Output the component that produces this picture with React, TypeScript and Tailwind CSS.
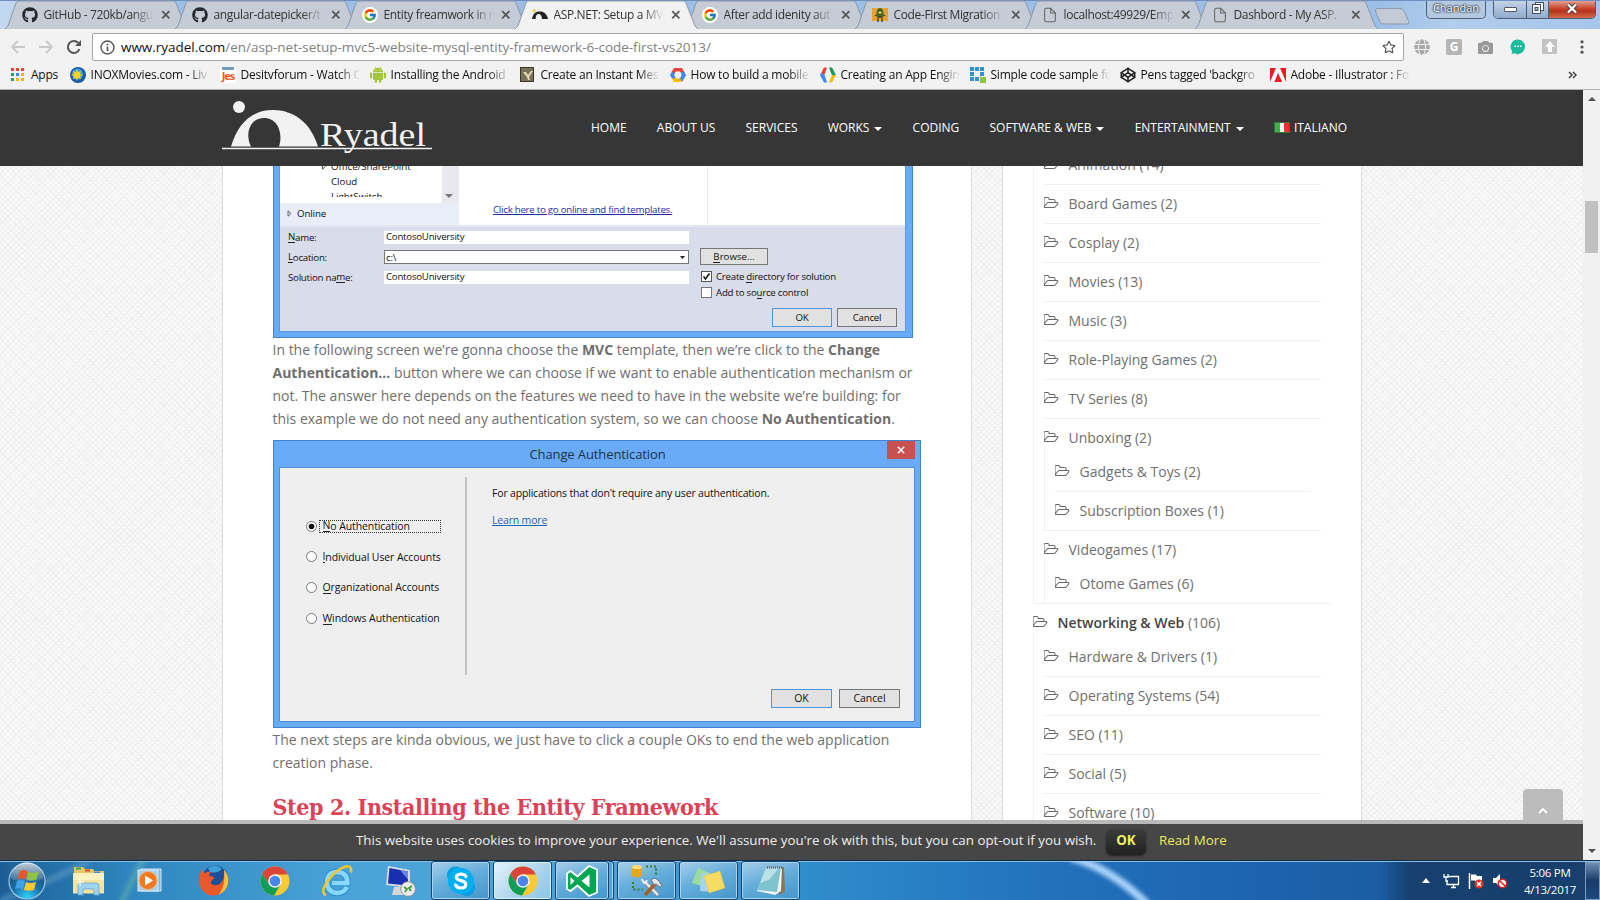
import React from "react";
import { FaGithub, FaRegStar, FaCamera, FaGlobe } from "react-icons/fa";
import { FcGoogle } from "react-icons/fc";
import { FiCodepen, FiFile } from "react-icons/fi";

const ui = "font-['Open_Sans','Noto_Sans',sans-serif]";

/* ---------- icons ---------- */

function RyadelIcon() {
  return (
    <svg width="16" height="16" viewBox="0 0 16 16">
      <circle cx="2.2" cy="3.8" r="1.7" fill="#f5d442" />
      <path d="M0 12C1 6 4 4.400 8 4.400c4 0 7 2.600 8 7.600h-6C10 9.500 9 7 6.500 7 4.500 7 3.600 9 3.600 12z" fill="#222" />
    </svg>
  );
}

function BugIcon() {
  return (
    <svg width="16" height="16" viewBox="0 0 16 16">
      <rect y="1" width="16" height="13" fill="#e8a030" />
      <ellipse cx="8" cy="6" rx="3.500" ry="5" fill="#4b6b2a" />
      <path d="M6 4h4M5.500 7h5M5 10h6M6 11v4M10 11v4M3 8l2 1M13 8l-2 1" stroke="#2b3a18" strokeWidth="1.200" />
      <circle cx="8" cy="5.500" r="1.600" fill="#b7cf6a" />
    </svg>
  );
}

function AndroidIcon() {
  return (
    <svg width="16" height="17" viewBox="0 0 16 17" fill="#a4c639">
      <path d="M3 6a5 4.200 0 0 1 10 0zM3 6.800h10v6.200q0 1-1 1H4q-1 0-1-1z" />
      <path d="M5 .800l1.200 2M11 .800l-1.200 2" stroke="#a4c639" strokeWidth=".8" />
      <rect x="0" y="6.600" width="2.200" height="6" rx="1.100" />
      <rect x="13.800" y="6.600" width="2.200" height="6" rx="1.100" />
      <rect x="4.800" y="13" width="2.200" height="4" rx="1.100" />
      <rect x="9" y="13" width="2.200" height="4" rx="1.100" />
      <circle cx="5.900" cy="4.200" r=".55" fill="#fff" />
      <circle cx="10.100" cy="4.200" r=".55" fill="#fff" />
    </svg>
  );
}

function ChromeIcon({ size = 30 }: { size?: number }) {
  return (
    <svg width={size} height={size} viewBox="0 0 30 30">
      <circle cx="15" cy="15" r="14.500" fill="#fbc934" />
      <path d="M2.440 7.750A14.500 14.500 0 0 1 27.560 7.750L15 8.500 9 18z" fill="#db4437" />
      <path d="M2.440 7.750A14.500 14.500 0 0 0 14 29.500L20.600 18.400 9.300 18.200z" fill="#0f9d58" />
      <path d="M15 8.400h12.900A14.500 14.500 0 0 0 27.560 7.750z" fill="#db4437" />
      <circle cx="15" cy="15" r="6.800" fill="#f4f4f4" />
      <circle cx="15" cy="15" r="5.300" fill="#4a86ea" />
    </svg>
  );
}

function FolderOpen() {
  return (
    <svg width="15" height="14" viewBox="0 0 1920 1792" fill="#666" className="shrink-0">
      <path d="M1717 931q0-35-53-35h-1088q-40 0-85.500 21.500t-71.500 52.500l-294 363q-18 24-18 40 0 35 53 35h1088q40 0 86-22t71-53l294-363q18-22 18-39zm-1141-163h768v-160q0-40-28-68t-68-28h-576q-40 0-68-28t-28-68v-64q0-40-28-68t-68-28h-320q-40 0-68 28t-28 68v853l256-315q44-53 116-87.500t140-34.500zm1269 163q0 62-46 120l-295 363q-43 53-116 87.500t-140 34.500h-1088q-92 0-158-66t-66-158v-960q0-92 66-158t158-66h320q92 0 158 66t66 158v32h544q92 0 158 66t66 158v160h192q54 0 99 24.500t67 70.500q15 32 15 68z" />
    </svg>
  );
}

/* ---------- browser chrome ---------- */

type TabData = { title: string; icon: React.ReactNode; active?: boolean };

const google = (
  <span className="flex h-4 w-4 items-center justify-center rounded-full bg-white">
    <FcGoogle size={14} />
  </span>
);
const page = <FiFile size={16} color="#666" strokeWidth={1.6} />;

const tabs: TabData[] = [
  { title: "GitHub - 720kb/angu", icon: <FaGithub size={16} color="#24292e" /> },
  { title: "angular-datepicker/t", icon: <FaGithub size={16} color="#24292e" /> },
  { title: "Entity freamwork in m", icon: google },
  { title: "ASP.NET: Setup a MV", icon: <RyadelIcon />, active: true },
  { title: "After add idenity aut", icon: google },
  { title: "Code-First Migration", icon: <BugIcon /> },
  { title: "localhost:49929/Emp", icon: page },
  { title: "Dashbord - My ASP.", icon: page },
];

function Tab({ title, icon, active }: TabData) {
  return (
    <div className={active ? "relative z-20 flex h-[29px] w-[170px] items-center pl-[17px]" : "relative z-10 flex h-[29px] w-[170px] items-center pl-[17px]"}>
      <svg className="absolute top-0 left-0 -z-10" width="184" height="30" viewBox="0 0 184 30">
        <path
          d="M0 29 L3 26 L11 3 Q12 1 14 1 H168 Q170 1 171 3 L180 26 L183 29"
          fill={active ? "#f2f2f2" : "#c6ccd5"}
          stroke={active ? "#8f9bab" : "#8a97a8"}
        />
        {active && <path d="M1 29.500H182" stroke="#f2f2f2" strokeWidth="2" />}
      </svg>
      {icon}
      <span className="ml-[5.500px] w-[110px] text-[12px] tracking-[-0.36px] whitespace-nowrap text-[#333] [mask-image:linear-gradient(to_right,#000_80%,transparent)]">{title}</span>
      <svg className="ml-[7.500px]" width="10" height="10" viewBox="0 0 10 10">
        <path d="M1.200 1.200l7.200 7.200M8.400 1.200l-7.200 7.200" stroke="#555" strokeWidth="1.700" />
      </svg>
    </div>
  );
}

function TabStrip() {
  return (
    <div className="flex h-[29px] border-t border-[#6e8fbf] bg-[linear-gradient(to_right,#c3d8f0_0px,#9bbfe6_120px,#9bbfe6_1380px,#b3cdec_1450px,#a5c5ea_1600px)] pl-[5px]">
      <div className="-mt-px flex">
        {tabs.map((t) => (
          <Tab key={t.title} {...t} />
        ))}
      </div>
      <svg className="ml-[9px] mt-[6px]" width="38" height="19" viewBox="0 0 38 19">
        <path d="M3 1.500H26Q29 1.500 30 4L35 15Q36 17 33 17H10Q7 17 6 15L1.500 4Q1 1.500 3 1.500z" fill="#c3cad5" stroke="#8d9bb0" />
      </svg>
      <div className="ml-[14px] flex h-[18px] w-[60px] items-center justify-center rounded-b-[5px] border border-t-0 border-[#4d5f78] bg-[#b4c8df] pb-[2px] text-[11px] text-white [text-shadow:0_0_2px_#000,0_0_2px_#000]">
        Chandan
      </div>
      <div className="ml-[7px] flex h-[18px] w-[103px] overflow-hidden rounded-b-[5px] border border-t-0 border-[#4d5f78]">
        <div className="flex w-[33px] items-center justify-center border-r border-[#4d5f78] bg-gradient-to-b from-[#c2d3e8] to-[#90abcc]">
          <div className="h-[5px] w-[13px] rounded-[1px] border border-[#4d5566] bg-white" />
        </div>
        <div className="flex w-[22px] items-center justify-center border-r border-[#4d5f78] bg-gradient-to-b from-[#c2d3e8] to-[#90abcc]">
          <svg className="-mt-[3px]" width="12" height="12" viewBox="0 0 12 12" fill="#fff" stroke="#454e60">
            <rect x="3.500" y=".5" width="8" height="8" />
            <rect x=".5" y="2.500" width="8" height="9" />
            <rect x="3" y="5.500" width="3" height="3" fill="#9fb5cf" />
          </svg>
        </div>
        <div className="flex flex-1 items-center justify-center bg-[linear-gradient(#e0a193,#c9422a_45%,#b5341c_60%,#d56a4a)]">
          <svg className="-mt-[3px]" width="12" height="11" viewBox="0 0 12 11">
            <path d="M2 1.500l8 8M10 1.500l-8 8" stroke="#4a3540" strokeWidth="4" />
            <path d="M2 1.500l8 8M10 1.500l-8 8" stroke="#fff" strokeWidth="2.400" />
          </svg>
        </div>
      </div>
    </div>
  );
}

function Toolbar() {
  return (
    <div className="flex h-[33px] items-center bg-[#f2f2f2] pt-[3px]">
      <svg className="ml-[10px]" width="16" height="14" viewBox="0 0 16 14" fill="none" stroke="#c9c9c9" strokeWidth="1.800">
        <path d="M15 7H2M8 1L2 7l6 6" />
      </svg>
      <svg className="ml-[12px]" width="16" height="14" viewBox="0 0 16 14" fill="none" stroke="#c9c9c9" strokeWidth="1.800">
        <path d="M1 7h13M8 1l6 6-6 6" />
      </svg>
      <svg className="ml-[12px]" width="16" height="16" viewBox="0 0 16 16">
        <path d="M13.500 10A6 6 0 1 1 12.200 3.800" fill="none" stroke="#555" strokeWidth="2" />
        <path d="M15 1v6H9z" fill="#555" />
      </svg>
      <div className="ml-[10px] flex h-[28px] w-[1312px] items-center rounded-[2px] border border-[#a6a6a6] bg-white">
        <svg className="ml-[7px]" width="15" height="15" viewBox="0 0 15 15" fill="none" stroke="#555" strokeWidth="1.400">
          <circle cx="7.500" cy="7.500" r="6.500" />
          <path d="M7.500 6.500v4.500M7.500 3.700v1.600" strokeWidth="1.700" />
        </svg>
        <span className="ml-[6px] flex-1 text-[13.500px] tracking-[-0.025px] whitespace-nowrap text-[#808080]">
          <span className="text-[#111]">www.ryadel.com</span>/en/asp-net-setup-mvc5-website-mysql-entity-framework-6-code-first-vs2013/
        </span>
        <FaRegStar className="mr-[7px]" size={14} color="#555" />
      </div>
      <div className="ml-[10px] flex w-[176px] items-center justify-between">
        <FaGlobe size={16} color="#a8a8a8" />
        <span className="flex h-4 w-4 items-center justify-center rounded-[2px] bg-[#b5b5b5] text-[12px] font-bold text-white">G</span>
        <FaCamera size={15} color="#999" />
        <svg width="16" height="16" viewBox="0 0 16 16">
          <path d="M8 .5a7.300 7.300 0 1 1-4 13.600L1.500 15.500l.8-3A7.300 7.300 0 0 1 8 .5z" fill="#1abc9c" />
          <path d="M4.500 7.200h1.500M7.300 7.200h1.500M10 7.200h1.500" stroke="#fff" strokeWidth="1.400" />
        </svg>
        <svg width="16" height="16" viewBox="0 0 16 16">
          <rect width="15" height="15" rx="1" fill="#c2c2c2" />
          <path d="M8 2l5 6h-3v5H6V8H3z" fill="#fff" />
        </svg>
        <svg width="16" height="16" viewBox="0 0 16 16" fill="#555">
          <circle cx="8" cy="2.800" r="1.600" />
          <circle cx="8" cy="8" r="1.600" />
          <circle cx="8" cy="13.200" r="1.600" />
        </svg>
      </div>
    </div>
  );
}

const bookmarks: { label: string; icon: React.ReactNode }[] = [
  {
    label: "INOXMovies.com - Liv",
    icon: (
      <svg width="16" height="16" viewBox="0 0 16 16">
        <circle cx="8" cy="8" r="8" fill="#1b5ca8" />
        <circle cx="7.500" cy="7" r="5.500" fill="#3fa0d8" />
        <path d="M7 2l1 3 3-1-1 3 3 1-3 1 1 3-3-1-1 3-1-3-3 1 1-3-3-1 3-1-1-3 3 1z" fill="#f7d21e" />
      </svg>
    ),
  },
  {
    label: "Desitvforum - Watch O",
    icon: (
      <span className="flex h-4 w-4 flex-col items-center bg-white leading-none">
        <span className="h-[3px] w-[12px] bg-[#6f9dbb]" />
        <span className="text-[11px] font-bold tracking-[-1px] text-[#ef5a28]">Jes</span>
      </span>
    ),
  },
  { label: "Installing the Android", icon: <AndroidIcon /> },
  {
    label: "Create an Instant Mes",
    icon: (
      <svg width="16" height="16" viewBox="0 0 16 16">
        <rect x=".5" y=".5" width="13" height="14" fill="#77725a" stroke="#3b3626" />
        <path d="M3 5l3 0 2 3 3-4h2l-4 6 1 3H8L7 10z" fill="#e9dcae" />
      </svg>
    ),
  },
  {
    label: "How to build a mobile",
    icon: (
      <svg width="16" height="16" viewBox="0 0 16 16">
        <path d="M4 1h8l2.500 4.500-3.500.5-1-1.500H6L4.500 6.500 1.500 5z" fill="#e2453a" />
        <path d="M14 4.500L16 8l-4 7-3-3.500 2.500-3.500-1-2.500z" fill="#4285f4" />
        <path d="M12 15H4l-2.500-4.500L5 9.500l1.500 2h4z" fill="#fbbc05" />
        <path d="M2 11.500L0 8l2-3.500 3 1.800L4.200 8l1.600 2.800z" fill="#4285f4" />
        <circle cx="8" cy="8" r="3.300" fill="#eef1f6" />
      </svg>
    ),
  },
  {
    label: "Creating an App Engin",
    icon: (
      <svg width="16" height="16" viewBox="0 0 16 16">
        <path d="M1 6.500L4 .5h3L4.500 8z" fill="#e2453a" />
        <path d="M0 8l1-2 3.500 2L7 15.500H4z" fill="#4285f4" />
        <path d="M9 .5h3l4 7.500-4 .5z" fill="#0f9d58" />
        <path d="M12 8h4l-4 7.500H9z" fill="#fbbc05" />
      </svg>
    ),
  },
  {
    label: "Simple code sample fo",
    icon: (
      <svg width="16" height="16" viewBox="0 0 16 16" fill="#2f93d0">
        <path d="M0 0h4v4H0zM5 0h4v4H5zM10 0h4v4h-4zM0 5h4v4H0zM10 5h4v4h-4zM0 10h4v4H0zM5 10h4v4H5z" />
        <rect x="10" y="10" width="6" height="6" fill="#8cc63f" />
      </svg>
    ),
  },
  { label: "Pens tagged 'backgro", icon: <FiCodepen size={16} color="#222" strokeWidth={2.4} /> },
  {
    label: "Adobe - Illustrator : Fo",
    icon: (
      <svg width="16" height="16" viewBox="0 0 16 16">
        <rect y="1" width="16" height="14" fill="#ed1c24" />
        <path d="M6 1h4l6 14h-4l-1.500-3.500H7L8.500 8 10 11H6L4.300 15H0z" fill="#fff" />
        <path d="M8 5.500l3.800 9.500H9.500L8.300 12H5.800z" fill="#ed1c24" />
      </svg>
    ),
  },
];

const appColors = ["bg-[#e2453a]", "bg-[#e2453a]", "bg-[#e2453a]", "bg-[#2f9e57]", "bg-[#4285f4]", "bg-[#f2b60c]", "bg-[#2f9e57]", "bg-[#f2b60c]", "bg-[#f2b60c]"];

function BookmarkBar() {
  return (
    <div className="flex h-[28px] items-center border-b border-[#b3b3b3] bg-[#f2f2f2] pb-[2px] pl-[11px] text-[12px] tracking-[-0.22px] text-[#111]">
      <div className="grid w-[13px] grid-cols-3 gap-[2px]">
        {appColors.map((c, i) => (
          <span key={i} className={`h-[3px] w-[3px] ${c}`} />
        ))}
      </div>
      <span className="ml-[7px] w-[39px]">Apps</span>
      {bookmarks.map((b) => (
        <div key={b.label} className="flex w-[150px] items-center">
          <span className="flex w-4 justify-center">{b.icon}</span>
          <span className="ml-[4.500px] w-[119px] whitespace-nowrap [mask-image:linear-gradient(to_right,#000_82%,transparent)]">{b.label}</span>
        </div>
      ))}
      <svg className="ml-[148px]" width="10" height="8" viewBox="0 0 10 8" fill="none" stroke="#444" strokeWidth="1.500">
        <path d="M1 1l3 3-3 3M5 1l3 3-3 3" />
      </svg>
    </div>
  );
}

/* ---------- site ---------- */

function Caret() {
  return (
    <svg className="ml-[5px] mt-[2px]" width="8" height="4" viewBox="0 0 8 4">
      <path d="M0 0h8L4 4z" fill="#fff" />
    </svg>
  );
}

const nav = [
  { label: "HOME" },
  { label: "ABOUT US" },
  { label: "SERVICES" },
  { label: "WORKS", caret: true },
  { label: "CODING" },
  { label: "SOFTWARE & WEB", caret: true },
  { label: "ENTERTAINMENT", caret: true },
];

function SiteHeader() {
  return (
    <header className="flex h-[76px] shrink-0 bg-[#363636]">
      <svg className="mt-[9px] ml-[222px]" width="211" height="58" viewBox="0 0 211 58">
        <circle cx="17" cy="8" r="6" fill="#f2f2f2" />
        <path d="M9 47.500C16 24 30 11 51 11s38 13 45 36.500H57C61 36 57 19 42 19S23 36 29 47.500z" fill="#f2f2f2" />
        <path d="M0 49.500H210" stroke="#f2f2f2" strokeWidth="1.300" />
        <text x="98" y="47" fontSize="33" fill="#f2f2f2" textLength="106" lengthAdjust="spacingAndGlyphs" className="font-['Liberation_Serif',serif]">
          Ryadel
        </text>
      </svg>
      <nav className="ml-[158px] flex h-[75px] items-center gap-[30.200px] text-[12px] text-white">
        {nav.map((n) => (
          <span key={n.label} className="flex items-center whitespace-nowrap">
            {n.label}
            {n.caret && <Caret />}
          </span>
        ))}
        <span className="flex items-center">
          <span className="mr-[4px] flex h-[11px] w-[16px] border border-[#2f7a35] border-r-[#d02020]">
            <span className="flex-1 bg-[#3fae49]" />
            <span className="flex-1 bg-white" />
            <span className="flex-1 bg-[#f03030]" />
          </span>
          ITALIANO
        </span>
      </nav>
    </header>
  );
}

function DialogButton({ label, primary, small }: { label: string; primary?: boolean; small?: boolean }) {
  return (
    <div
      className={`flex h-[19px] items-center justify-center border bg-[#e1e1e1] ${small ? "w-[60px]" : "w-[61px]"} ${primary ? "border-[#4a94e0]" : "border-[#777]"}`}
    >
      {label}
    </div>
  );
}

const U = ({ children }: { children: React.ReactNode }) => <span className="border-b border-[#222]">{children}</span>;

function NewProjectDialog() {
  return (
    <div className="h-[172px] w-[640px] border border-t-0 border-[#3f83cf] bg-[#6aabf7] pr-[6px] pl-[5px] text-[9.700px] leading-[13px] tracking-[-0.25px] text-[#111]">
      <div className="flex h-[166px] flex-col overflow-hidden border border-t-0 border-[#5a9be6] bg-[#d9dcea]">
        <div className="flex h-[59px] shrink-0">
          <div className="w-[179px] bg-[#e8edf8]">
            <div className="flex h-[37px] bg-white">
              <div className="h-[31px] w-[162px] overflow-hidden pl-[51px] tracking-normal">
                <div className="-mt-[7px] -ml-[9px] flex h-[15px] items-center">
                  <svg className="mr-[5px]" width="4" height="7" viewBox="0 0 4 7">
                    <path d="M.5.800v5.400L3.400 3.500z" fill="none" stroke="#555" />
                  </svg>
                  Office/SharePoint
                </div>
                <div className="h-[15px] leading-[15px]">Cloud</div>
                <div className="h-[15px] leading-[15px]">LightSwitch</div>
              </div>
              <div className="flex w-[17px] items-end justify-center bg-[#e8e8ee] pr-[3px] pb-[5px]">
                <svg width="8" height="4" viewBox="0 0 8 4">
                  <path d="M0 0h8L4 4z" fill="#777" />
                </svg>
              </div>
            </div>
            <div className="flex h-[21px] items-center pl-[7px] tracking-[-0.1px]">
              <svg className="mr-[5px]" width="5" height="7" viewBox="0 0 4 7">
                <path d="M.5.800v5.400L3.400 3.500z" fill="none" stroke="#444" strokeWidth=".8" />
              </svg>
              Online
            </div>
          </div>
          <div className="w-[249px] border-r border-[#ececf2] bg-white pt-[37px] pl-[34px] whitespace-nowrap">
            <span className="tracking-[-0.25px] text-[#1c30a8] underline">Click here to go online and find templates.</span>
          </div>
          <div className="flex-1 bg-white" />
        </div>
        <div className="flex flex-1 border-t-2 border-[#e4e7f3] pl-[8px]">
          <div className="flex w-[96px] flex-col">
            <div className="flex h-5 items-center leading-[11px]"><U>N</U>ame:</div>
            <div className="flex h-5 items-center leading-[11px]"><U>L</U>ocation:</div>
            <div className="flex h-5 items-center leading-[11px]">Solution na<U>m</U>e:</div>
          </div>
          <div className="flex w-[305px] flex-col pt-[3px]">
            <div className="mt-px h-[13px] bg-white pl-[2px] leading-[12px]">ContosoUniversity</div>
            <div className="mt-[6px] flex h-[14px] items-center justify-between border border-[#777] bg-white pr-[3px] pl-px">
              c:\
              <svg width="5" height="3" viewBox="0 0 5 3">
                <path d="M0 0h5L2.500 3z" fill="#222" />
              </svg>
            </div>
            <div className="mt-[7px] h-[13px] bg-white pl-[2px] leading-[12px]">ContosoUniversity</div>
          </div>
          <div className="ml-[11px] flex w-[200px] flex-col pt-[21px]">
            <div className="flex h-[17px] w-[68px] items-center justify-center border border-[#777] bg-[#e1e1e1] leading-[11px] tracking-normal">
              <U>B</U>rowse...
            </div>
            <div className="mt-[5px] flex h-[13px] items-center pl-px leading-[11px] whitespace-nowrap">
              <svg className="mr-[4px]" width="11" height="11" viewBox="0 0 11 11">
                <rect x=".5" y=".5" width="10" height="10" fill="#fff" stroke="#555" />
                <path d="M2.500 5.500l2 2.500 4-5.500" fill="none" stroke="#111" strokeWidth="1.500" />
              </svg>
              Create <span className="w-[2px]" /><U>d</U>irectory for solution
            </div>
            <div className="mt-[3px] flex h-[13px] items-center pl-px leading-[11px] whitespace-nowrap">
              <svg className="mr-[4px]" width="11" height="11" viewBox="0 0 11 11">
                <rect x=".5" y=".5" width="10" height="10" fill="#fff" stroke="#777" />
              </svg>
              Add to so<U>u</U>rce control
            </div>
            <div className="mt-[9px] flex gap-[5px] pl-[72px]">
              <DialogButton label="OK" primary small />
              <DialogButton label="Cancel" small />
            </div>
          </div>
        </div>
      </div>
    </div>
  );
}

function Radio({ first, rest, checked }: { first: string; rest: string; checked?: boolean }) {
  return (
    <div className="flex h-[30.600px] items-center">
      <svg className="mr-[2px]" width="11" height="11" viewBox="0 0 11 11">
        <circle cx="5.500" cy="5.500" r="5" fill="#fff" stroke="#777" />
        {checked && <circle cx="5.500" cy="5.500" r="2.800" fill="#111" />}
      </svg>
      <span
        className={
          checked
            ? "flex h-[13px] w-[122px] items-center border border-dotted border-[#333] pl-[2.500px] leading-[11px] whitespace-nowrap"
            : "flex h-[13px] items-center pl-[3.500px] leading-[12px] whitespace-nowrap"
        }
      >
        <U>{first}</U>
        {rest}
      </span>
    </div>
  );
}

function ChangeAuthDialog() {
  return (
    <div className="flex h-[288px] w-[648px] flex-col border border-[#3f83cf] bg-[#6aabf7] px-[6px] pb-[5px] text-[10.500px] tracking-[-0.1px] text-[#111]">
      <div className="flex h-[26px] shrink-0">
        <div className="flex-1 pl-[28px] text-center text-[13px] leading-[27px] text-[#1d3348]">Change Authentication</div>
        <div className="-mr-px flex h-[18px] w-[28px] items-center justify-center bg-[#c75050]">
          <svg width="8" height="8" viewBox="0 0 8 8">
            <path d="M.8.800l6.400 6.400M7.200.800L.8 7.200" stroke="#fff" strokeWidth="1.500" />
          </svg>
        </div>
      </div>
      <div className="-mx-px flex flex-1 flex-col border border-[#4a90dd] bg-[#f0eff0] pt-[9px] pr-[14px]">
        <div className="flex">
          <div className="h-[198px] w-[187px] border-r-2 border-[#c3c3c3] pt-[34px] pl-[26px]">
            <Radio first="N" rest="o Authentication" checked />
            <Radio first="I" rest="ndividual User Accounts" />
            <Radio first="O" rest="rganizational Accounts" />
            <Radio first="W" rest="indows Authentication" />
          </div>
          <div className="pt-[8px] pl-[25px] leading-[16px] tracking-[-0.18px]">
            <p>For applications that don't require any user authentication.</p>
            <p className="mt-[11px] text-[#1b65b5] underline">Learn more</p>
          </div>
        </div>
        <div className="mt-[14px] flex justify-end gap-[7px]">
          <DialogButton label="OK" primary />
          <DialogButton label="Cancel" />
        </div>
      </div>
    </div>
  );
}

function Article() {
  return (
    <article className="ml-[222px] w-[750px] border-x border-[#dcdcdc] bg-white pl-[50px] text-[14px] leading-[23px] text-[#6f6f6f]">
      <NewProjectDialog />
      <p className="-ml-[0.500px] w-[660px] whitespace-nowrap">
        In the following screen we’re gonna choose the <b>MVC</b> template, then we’re click to the <b>Change</b>
        <br />
        <b>Authentication…</b> button where we can choose if we want to enable authentication mechanism or
        <br />
        not. The answer here depends on the features we need to have in the website we’re building: for
        <br />
        this example we do not need any authentication system, so we can choose <b>No Authentication</b>.
      </p>
      <div className="mt-[10px]">
        <ChangeAuthDialog />
      </div>
      <p className="-ml-[0.500px] whitespace-nowrap">
        The next steps are kinda obvious, we just have to click a couple OKs to end the web application
        <br />
        creation phase.
      </p>
      <h2 className="mt-[17px] -ml-[0.500px] text-[23px] leading-[32px] font-bold tracking-[-0.38px] whitespace-nowrap text-[#dc4155] font-['DejaVu_Serif_Condensed','DejaVu_Serif',serif] [font-stretch:condensed]">
        Step 2. Installing the Entity Framework
      </h2>
    </article>
  );
}

type Category = { name: string; count: number; children?: Category[]; bold?: boolean };

const entertainment: Category[] = [
  { name: "Animation", count: 14 },
  { name: "Board Games", count: 2 },
  { name: "Cosplay", count: 2 },
  { name: "Movies", count: 13 },
  { name: "Music", count: 3 },
  { name: "Role-Playing Games", count: 2 },
  { name: "TV Series", count: 8 },
  {
    name: "Unboxing",
    count: 2,
    children: [
      { name: "Gadgets & Toys", count: 2 },
      { name: "Subscription Boxes", count: 1 },
    ],
  },
  { name: "Videogames", count: 17, children: [{ name: "Otome Games", count: 6 }] },
];

const networking: Category = {
  name: "Networking & Web",
  count: 106,
  bold: true,
  children: [
    { name: "Hardware & Drivers", count: 1 },
    { name: "Operating Systems", count: 54 },
    { name: "SEO", count: 11 },
    { name: "Social", count: 5 },
    { name: "Software", count: 10 },
  ],
};

function CategoryItem({ item }: { item: Category }) {
  return (
    <li className="border-b border-[#f0f0f0] last:border-b-0">
      <div className={item.children ? "flex h-[28px] items-start" : "flex h-[38px] items-start"}>
        <span className="flex h-[36px] items-center whitespace-nowrap">
          <FolderOpen />
          <span className="ml-[9.500px]">
            {item.bold ? <span className="font-semibold text-[#444]">{item.name}</span> : item.name} ({item.count})
          </span>
        </span>
      </div>
      {item.children && <CategoryList items={item.children} />}
    </li>
  );
}

function CategoryList({ items, flush }: { items: Category[]; flush?: boolean }) {
  return (
    <ul className={flush ? "border-l border-[#f0f0f0] pr-[10px] pl-[10px]" : "border-l border-[#f0f0f0] pt-[6px] pr-[10px] pl-[10px]"}>
      {items.map((c) => (
        <CategoryItem key={c.name} item={c} />
      ))}
    </ul>
  );
}

function Sidebar() {
  return (
    <aside className="ml-[30px] w-[360px] border-x border-[#dcdcdc] bg-white pr-[30px] pl-[30px] text-[14px] text-[#6f6f6f]">
      <div className="-mt-[20px]">
        <div className="border-b border-[#f0f0f0]">
          <CategoryList items={entertainment} flush />
        </div>
        <ul>
          <CategoryItem item={networking} />
        </ul>
      </div>
    </aside>
  );
}

function CookieBar() {
  return (
    <div className="flex h-[40px] shrink-0 items-center border-t-4 border-[#b9b9b9] bg-[#464646] pb-px pl-[356px] text-[13.333px] text-[#eee]">
      <span className="w-[750px] pb-px whitespace-nowrap">This website uses cookies to improve your experience. We'll assume you're ok with this, but you can opt-out if you wish.</span>
      <span className="flex h-[26px] w-[40px] items-center justify-center rounded-[6px] bg-gradient-to-b from-[#3c3c3c] to-[#222] pb-px font-bold text-[#eef066] shadow-[0_1px_2px_#222]">OK</span>
      <span className="ml-[13px] pb-px text-[#e6ea62]">Read More</span>
    </div>
  );
}

function Scrollbar() {
  return (
    <div className="flex w-[17px] flex-col items-center bg-[#f1f1f1]">
      <svg className="mt-[7px]" width="8" height="4" viewBox="0 0 8 4">
        <path d="M4 0l4 4H0z" fill="#505050" />
      </svg>
      <div className="mt-[100px] h-[52px] w-[13px] bg-[#c1c1c1]" />
      <svg className="mt-auto mb-[7px]" width="8" height="4" viewBox="0 0 8 4">
        <path d="M0 0h8L4 4z" fill="#505050" />
      </svg>
    </div>
  );
}

/* ---------- taskbar ---------- */

function StartOrb() {
  return (
    <svg className="ml-[8px]" width="38" height="38" viewBox="0 0 38 38">
      <defs>
        <radialGradient id="orb" cx=".5" cy=".95" r=".9">
          <stop offset="0" stopColor="#2fd0ff" />
          <stop offset=".45" stopColor="#1c6fa8" />
          <stop offset="1" stopColor="#1b466e" />
        </radialGradient>
        <linearGradient id="orbShine" x2="0" y2="1">
          <stop offset="0" stopColor="#fff" stopOpacity=".75" />
          <stop offset="1" stopColor="#fff" stopOpacity=".1" />
        </linearGradient>
      </defs>
      <circle cx="19" cy="19" r="18" fill="url(#orb)" stroke="#9cc6e4" strokeWidth="1.200" />
      <path d="M2.500 17A16.500 16.500 0 0 1 35.500 17Q19 22 2.500 17z" fill="url(#orbShine)" />
      <path d="M12 9q4-2 7.500.3l-2 8q-3-2-8-.3z" fill="#e8542a" />
      <path d="M20.500 10q4 2 10-.5l-2 8q-5 2-10 0z" fill="#8fc43e" />
      <path d="M9 19q4-2 8 .3l-2 8q-4-2-8-.2z" fill="#3fa0e8" />
      <path d="M18 20q4 2 10 0l-2 8q-5 1.500-10 0z" fill="#fcc92e" />
    </svg>
  );
}

function ExplorerIcon() {
  return (
    <svg width="34" height="30" viewBox="0 0 34 30">
      <path d="M2 1h9l2 2h8l1 2h10v22H2z" fill="#e6c766" />
      <rect x="4" y="1.500" width="5" height="2" fill="#2fa84a" />
      <rect x="13" y="3.500" width="5" height="2" fill="#d8502e" />
      <rect x="22" y="5.500" width="6" height="2" fill="#3b8fe0" />
      <path d="M1 7h31v20.500H1z" fill="#f7e49c" />
      <path d="M1 7h31v7H1z" fill="#fbf0c0" />
      <path d="M6 29V20q0-3 3-3h15q3 0 3 3v9h-5v-6H11v6z" fill="#9ed4f2" stroke="#5fa5cf" strokeWidth=".8" />
      <path d="M8 12v8M4 16h8" stroke="#fff" strokeWidth="1.200" />
    </svg>
  );
}

function MediaPlayerIcon() {
  return (
    <svg width="28" height="26" viewBox="0 0 28 26">
      <rect x="4" y="1" width="20" height="22" fill="#7fb9e0" stroke="#cfe6f6" />
      <rect x="1" y="2" width="20" height="21" fill="#a9d0ea" stroke="#d8ecf8" />
      <circle cx="11" cy="12.500" r="9" fill="#f07820" stroke="#f8b070" />
      <path d="M8 7.500l8 5-8 5z" fill="#fff" />
    </svg>
  );
}

function FirefoxIcon() {
  return (
    <svg width="31" height="31" viewBox="0 0 31 31">
      <circle cx="17" cy="13" r="12.500" fill="#1d4f9a" />
      <path d="M10 3q8-5 14 1-5 5-12 3z" fill="#3fa0d8" />
      <path d="M26 5q6 7 3.500 15Q26 30 15 30.500 4 30 1.500 19 .5 11 4 4q1 3 3 4 3-2 6-1-2 2-1.500 4 4 0 5 2-3 2-4 5 4 4 9 1 6-5 4.500-14z" fill="#e8582a" />
      <path d="M26 5q6 7 3.500 15-2 7-9 9.500Q28 22 26 5z" fill="#f9c23c" />
    </svg>
  );
}

function IEIcon() {
  return (
    <svg width="32" height="32" viewBox="0 0 32 32">
      <path d="M26.500 22Q23 28 16 28 6 27 6 17 6.500 7 16.500 7q10 .5 10 11H11" fill="none" stroke="#2a8fd0" strokeWidth="6.500" />
      <path d="M26 22Q23 28 16 28 6 27 6 17 6.500 7 16.500 7q10 .5 10 11H11" fill="none" stroke="#86d8fc" strokeWidth="4.500" />
      <path d="M5 30Q-1 28 6 17 15 4 25 1.500q6-1 5 6" fill="none" stroke="#f3c728" strokeWidth="2.500" />
    </svg>
  );
}

function RemoteIcon() {
  return (
    <svg width="32" height="32" viewBox="0 0 32 32">
      <path d="M10 22l9 0 1 5 3 3H8z" fill="#d4d8dc" />
      <path d="M4 1l22 4v18L2 20z" fill="#d9dde0" />
      <path d="M5.500 3l18.500 3.500v14L4 18.500z" fill="#1a2fb0" />
      <path d="M16 5l8 1.500v8z" fill="#6b86ea" />
      <circle cx="24" cy="24" r="7.300" fill="#ececec" stroke="#999" />
      <path d="M20 22l3 2-2 3M28 21l-3 2 2 3" fill="none" stroke="#3c9c36" strokeWidth="1.800" />
    </svg>
  );
}

function SkypeIcon() {
  return (
    <svg width="30" height="30" viewBox="0 0 30 30">
      <circle cx="9.500" cy="9" r="8.500" fill="#009fe3" />
      <circle cx="20.500" cy="21.500" r="8.500" fill="#009fe3" />
      <circle cx="15" cy="15" r="13" fill="#00aff0" />
      <path d="M20 10.500Q18.500 8 15 8q-4.500.2-4.700 3 0 2.600 4.700 3.600 4.800 1 4.800 4Q19.500 22 15 22q-4 0-5.500-3" fill="none" stroke="#fff" strokeWidth="3.200" strokeLinecap="round" />
    </svg>
  );
}

function VisualStudioIcon() {
  return (
    <svg width="32" height="32" viewBox="0 0 32 32">
      <path d="M23 1l8 3.500v23L23 31 11.500 20.500 4.500 26 1 24V8.500L4.500 6l7 5.500z" fill="#00a651" stroke="#fff" strokeWidth="1.800" strokeLinejoin="round" />
      <path d="M23.500 9.500v13L15.500 16zM4.500 12v8l4-4z" fill="#fff" />
    </svg>
  );
}

function DbToolsIcon() {
  return (
    <svg width="32" height="33" viewBox="0 0 32 33">
      <path d="M1 3v9q5 3 10 0V3z" fill="#e3a81e" />
      <ellipse cx="6" cy="3" rx="5" ry="2" fill="#f9dc78" />
      <path d="M15 2.500h10v10M2 18v7.500h10" fill="none" stroke="#3d7d22" strokeWidth="2" strokeDasharray="2 2" />
      <path d="M13 17l14 14" stroke="#6b7784" strokeWidth="4" />
      <path d="M13 17l14 14" stroke="#e4e8ec" strokeWidth="2.800" />
      <path d="M25 19L14 31" stroke="#a8602a" strokeWidth="3.500" />
      <path d="M20 15.500l4-1.500 4 3 3 5-2 1-4-3-2 1z" fill="#e4e8ec" stroke="#6b7784" />
      <path d="M10.500 15l2.500 4 3.500-2.500" stroke="#e4e8ec" strokeWidth="2" fill="none" />
    </svg>
  );
}

function StickyIcon() {
  return (
    <svg width="34" height="27" viewBox="0 0 34 27">
      <path d="M6 1l12 5-5 14-13-4z" fill="#9bdc9a" />
      <path d="M9 6l13 1-1 18-13-1z" fill="#a8d4f4" />
      <path d="M12 9l16-5 5 17-16 5z" fill="#f6dc62" stroke="#e3c040" strokeWidth=".5" />
    </svg>
  );
}

function NotepadIcon() {
  return (
    <svg width="30" height="31" viewBox="0 0 30 31">
      <path d="M12 3l16-1 1 24-5 4z" fill="#8d7453" />
      <path d="M10 3l16-1-1 24-6 4L1 26z" fill="#eef3f5" />
      <path d="M10 3l15-1-4 25-20-2z" fill="#7fc3cf" />
      <path d="M10 3l13 0-10 12-9 3z" fill="#b9e2e6" />
      <path d="M11 2.500h15" stroke="#667" strokeWidth="2.500" strokeDasharray="1 1" />
    </svg>
  );
}

function TaskButton({ children, active }: { children: React.ReactNode; active?: boolean }) {
  return (
    <div
      className={
        active
          ? "mr-[3px] flex h-[39px] w-[59px] items-center justify-center rounded-[3px] border border-[#16466e] bg-[linear-gradient(135deg,#e4f3fc,#a9d3ec_60%,#8cc4e6)] shadow-[inset_0_0_0_1px_#dff1fb]"
          : "mr-[3px] flex h-[39px] w-[59px] items-center justify-center rounded-[3px] border border-[#16466e] bg-[linear-gradient(160deg,#a8cfe9,#67aedb_45%,#4396cc)] shadow-[inset_0_0_0_1px_#a9d3ee]"
      }
    >
      {children}
    </div>
  );
}

function Taskbar() {
  return (
    <div className="relative flex h-[40px] items-center overflow-hidden border-t border-[#0c2c4c] bg-[linear-gradient(to_right,#1c5f96_0px,#2f86c0_130px,#4ba3d8_350px,#4ba3d8_600px,#2f8ccb_810px,#2272bd_1040px,#1d63b0_1250px,#1c5da2_1380px,#16406f_1410px,#183f6e_1600px)] shadow-[inset_0_1px_0_#8dbde0]">
      <svg className="absolute top-0 left-0" width="1600" height="40">
        <defs>
          <filter id="soft">
            <feGaussianBlur stdDeviation="2" />
          </filter>
        </defs>
        <path d="M1070 -4Q1112 8 1148 44" fill="none" stroke="#a9d2fa" strokeWidth="8" filter="url(#soft)" />
        <path d="M0 40Q50 20 90 0" stroke="#7fb2d8" strokeWidth="6" fill="none" opacity=".4" filter="url(#soft)" />
        <path d="M120 44l24-48" stroke="#7cc8a0" strokeWidth="6" opacity=".4" filter="url(#soft)" />
      </svg>
      <div className="relative flex w-full items-center">
        <StartOrb />
        <div className="ml-[12px] flex items-center">
          <div className="flex w-[62px] justify-center"><ExplorerIcon /></div>
          <div className="flex w-[62px] justify-center"><MediaPlayerIcon /></div>
          <div className="flex w-[62px] justify-center"><FirefoxIcon /></div>
          <div className="flex w-[62px] justify-center"><ChromeIcon /></div>
          <div className="flex w-[62px] justify-center"><IEIcon /></div>
          <div className="flex w-[63px] justify-center"><RemoteIcon /></div>
        </div>
        <TaskButton><SkypeIcon /></TaskButton>
        <TaskButton active><ChromeIcon /></TaskButton>
        <div className="flex w-[62px]">
          <div className="z-10 flex h-[39px] w-[54px] items-center justify-center rounded-[3px] border border-[#16466e] bg-[linear-gradient(160deg,#a8cfe9,#67aedb_45%,#4396cc)] shadow-[inset_0_0_0_1px_#a9d3ee]">
            <VisualStudioIcon />
          </div>
          <div className="h-[39px] w-[5px] rounded-r-[3px] border border-l-0 border-[#16466e] bg-[#5aa5d5] shadow-[inset_-1px_0_0_#a9d3ee]" />
        </div>
        <TaskButton><DbToolsIcon /></TaskButton>
        <TaskButton><StickyIcon /></TaskButton>
        <TaskButton><NotepadIcon /></TaskButton>
        <div className="ml-auto flex items-center">
          <svg width="8" height="5" viewBox="0 0 8 5">
            <path d="M4 0l4 5H0z" fill="#fff" />
          </svg>
          <svg className="ml-[13px]" width="17" height="16" viewBox="0 0 17 16" fill="none" stroke="#fff" strokeWidth="1.300">
            <path d="M5 3.500h10.500v8H4V8M8 14.500h5M10.500 12v2.500M1 1v3h4V1M3 4v4h2" />
          </svg>
          <svg className="ml-[8px]" width="16" height="16" viewBox="0 0 16 16">
            <path d="M1.500 0v16" stroke="#fff" strokeWidth="1.500" />
            <path d="M3 1.500h5l1 1.500h5v6H8L7 7.500H3z" fill="#fff" />
            <circle cx="11" cy="11" r="4.500" fill="#e0301e" />
            <path d="M9 9l4 4M13 9l-4 4" stroke="#fff" strokeWidth="1.600" />
          </svg>
          <svg className="ml-[8px]" width="16" height="16" viewBox="0 0 16 16">
            <path d="M1 5h3l4-4v13l-4-4H1z" fill="#fff" />
            <circle cx="10.500" cy="10.500" r="4.200" fill="#fff" stroke="#e02020" strokeWidth="1.600" />
            <path d="M7.500 7.500l6 6" stroke="#e02020" strokeWidth="1.600" />
          </svg>
          <div className="ml-[12px] w-[60px] text-center text-[11.500px] leading-[17px] tracking-[-0.25px] text-white">
            5:06 PM
            <br />
            4/13/2017
          </div>
          <div className="ml-[5px] h-[38px] w-[15px] border border-[#7d9cc0] bg-gradient-to-b from-[#6f8fb4] via-[#173a66] to-[#1d4b82]" />
        </div>
      </div>
    </div>
  );
}

/* ---------- page ---------- */

export default function App() {
  return (
    <div className={`flex h-[900px] w-[1600px] flex-col overflow-hidden bg-white ${ui}`}>
      <TabStrip />
      <Toolbar />
      <BookmarkBar />
      <div className="flex h-[770px]">
        <div className="relative flex w-[1583px] flex-col">
          <SiteHeader />
          <main className="flex flex-1 overflow-hidden bg-[#f9f9f9] bg-[repeating-linear-gradient(45deg,#efefef_0px,#efefef_1px,transparent_1px,transparent_4px),repeating-linear-gradient(-45deg,#efefef_0px,#efefef_1px,transparent_1px,transparent_4px)]">
            <div className="flex h-[654px]">
              <Article />
              <Sidebar />
            </div>
          </main>
          <div className="absolute top-[699px] left-[1523px] flex h-[31px] w-[40px] items-center justify-center rounded-t-[4px] bg-[#bcbcbc] pt-[11px]">
            <svg width="10" height="7" viewBox="0 0 10 7">
              <path d="M1 6l4-4 4 4" fill="none" stroke="#fff" strokeWidth="1.800" />
            </svg>
          </div>
          <CookieBar />
        </div>
        <Scrollbar />
      </div>
      <Taskbar />
    </div>
  );
}
